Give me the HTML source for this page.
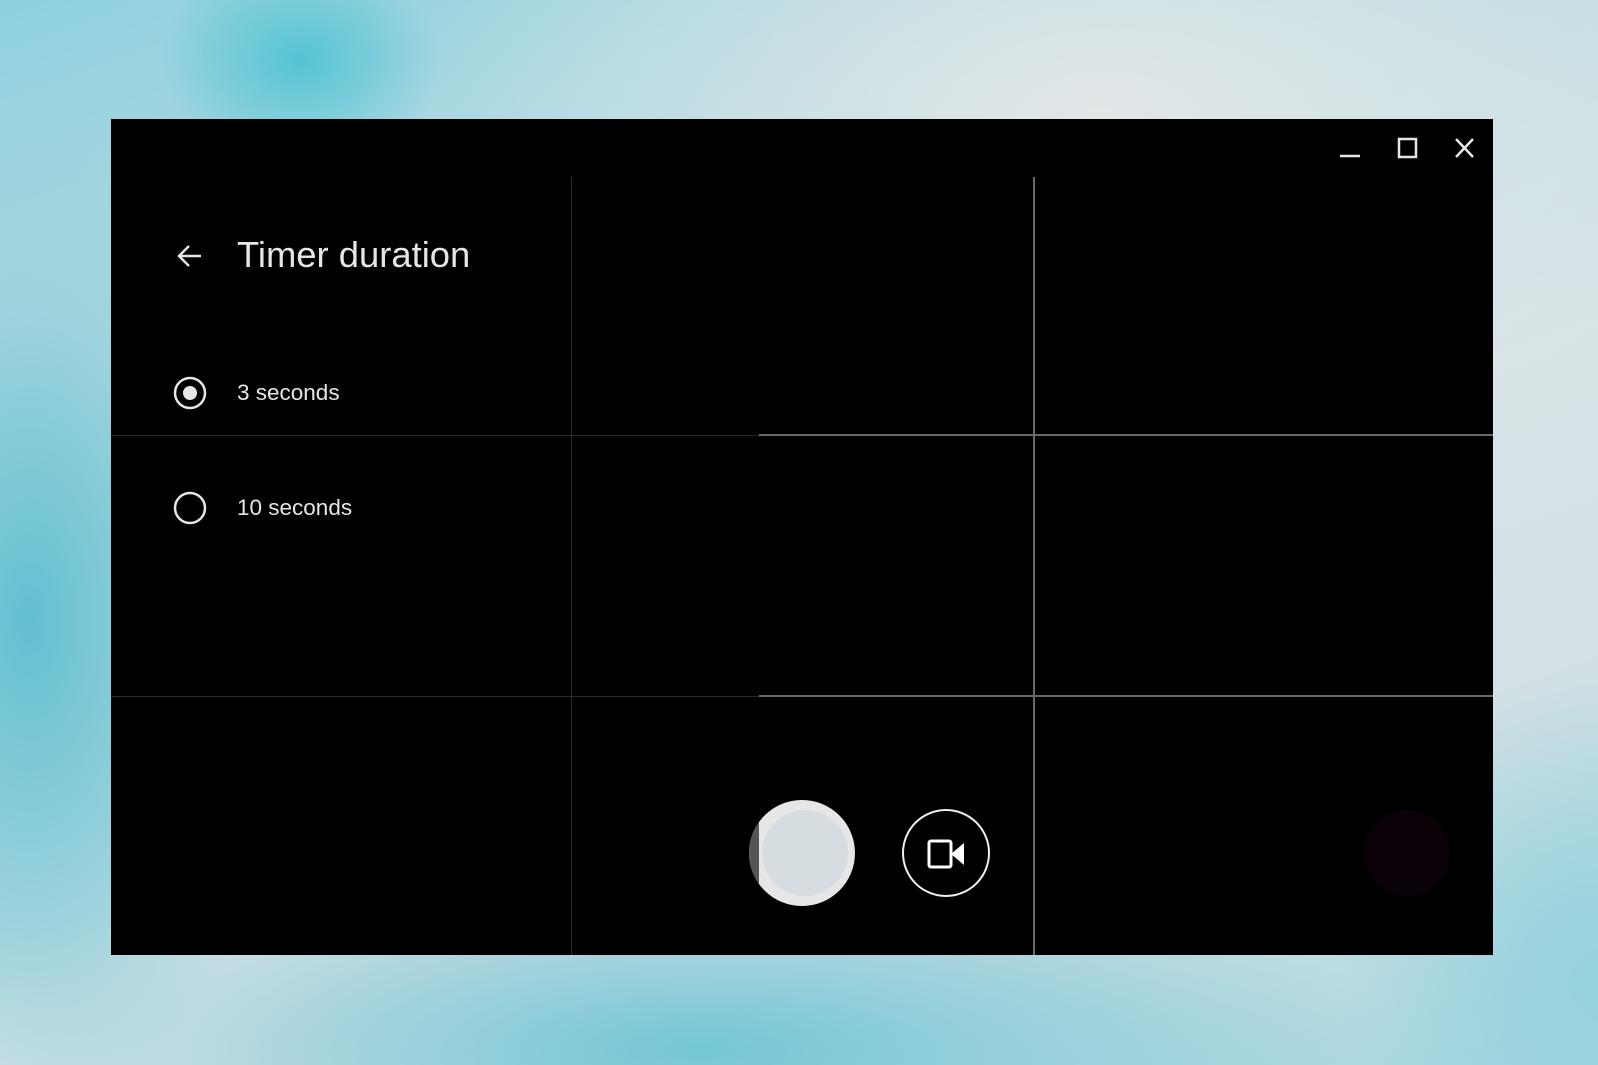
<!DOCTYPE html>
<html><head><meta charset="utf-8"><style>
html,body{margin:0;padding:0;width:1598px;height:1065px;overflow:hidden;font-family:"Liberation Sans",Roboto,sans-serif;}
body{background:
radial-gradient(ellipse 140px 110px at 300px 60px,#55c4d3 0%,rgba(85,196,211,0) 100%),
radial-gradient(ellipse 260px 520px at 30px 620px,#62bfd1 0%,#9ed3dd 60%,rgba(160,214,224,0) 100%),
radial-gradient(ellipse 700px 200px at 700px 1050px,#74c6d6 0%,rgba(124,203,217,0) 100%),
radial-gradient(ellipse 260px 300px at 1598px 980px,#94d2de 0%,rgba(159,215,226,0) 100%),
radial-gradient(ellipse 700px 400px at 1100px 120px,#e2e6e7 0%,rgba(226,230,231,0) 100%),
linear-gradient(160deg,#8fd0de 0%,#b8dde3 30%,#d8e3e6 55%,#d3e0e4 75%,#a8d7e0 100%);}
.win{position:absolute;left:111px;top:119px;width:1382px;height:836px;background:#000;}
.l{position:absolute;}
.t{position:absolute;color:#e6e6e6;white-space:nowrap;}
</style></head><body>
<div class="win">
  <div class="l" style="left:460px;top:58px;width:1px;height:778px;background:#2a2a2a"></div>
  <div class="l" style="left:922px;top:58px;width:2px;height:778px;background:#6a6a6a"></div>
  <div class="l" style="left:0;top:316px;width:648px;height:1px;background:#2a2a2a"></div>
  <div class="l" style="left:648px;top:315px;width:734px;height:2px;background:#6a6a6a"></div>
  <div class="l" style="left:0;top:577px;width:648px;height:1px;background:#2a2a2a"></div>
  <div class="l" style="left:648px;top:576px;width:734px;height:2px;background:#6a6a6a"></div>
</div>
<svg style="position:absolute;left:0;top:0" width="1598" height="1065">
  <defs><clipPath id="c"><circle cx="802" cy="853" r="53"/></clipPath></defs>
  <g stroke="#e6e6e6" stroke-width="2.5" fill="none">
    <line x1="1340" y1="156" x2="1360" y2="156"/>
    <rect x="1399" y="139" width="17" height="18"/>
    <line x1="1456" y1="139" x2="1473" y2="157"/><line x1="1473" y1="139" x2="1456" y2="157"/>
    <path d="M201 256H180M189 246L179 256L189 266"/>
    <circle cx="190" cy="393" r="15"/>
    <circle cx="190" cy="508" r="15"/>
  </g>
  <circle cx="190" cy="393" r="7" fill="#e6e6e6"/>
  <circle cx="802" cy="853" r="53" fill="#e6e6e6"/>
  <rect x="749" y="800" width="10" height="107" fill="#555" clip-path="url(#c)"/>
  <circle cx="805" cy="853" r="43" fill="#d6dde0"/>
  <circle cx="946" cy="853" r="43" stroke="#f0f0f0" stroke-width="2" fill="none"/>
  <rect x="929" y="841" width="22" height="26" rx="2" stroke="#fff" stroke-width="3" fill="none"/>
  <path d="M951 854L964 843V865Z" fill="#fff"/>
  <circle cx="1407" cy="853" r="43" fill="#0b0209"/>
</svg>
<div class="t" style="left:237px;top:234px;font-size:36.4px;">Timer duration</div>
<div class="t" style="left:237px;top:380px;font-size:22.5px;">3 seconds</div>
<div class="t" style="left:237px;top:495px;font-size:22.5px;">10 seconds</div>
</body></html>
